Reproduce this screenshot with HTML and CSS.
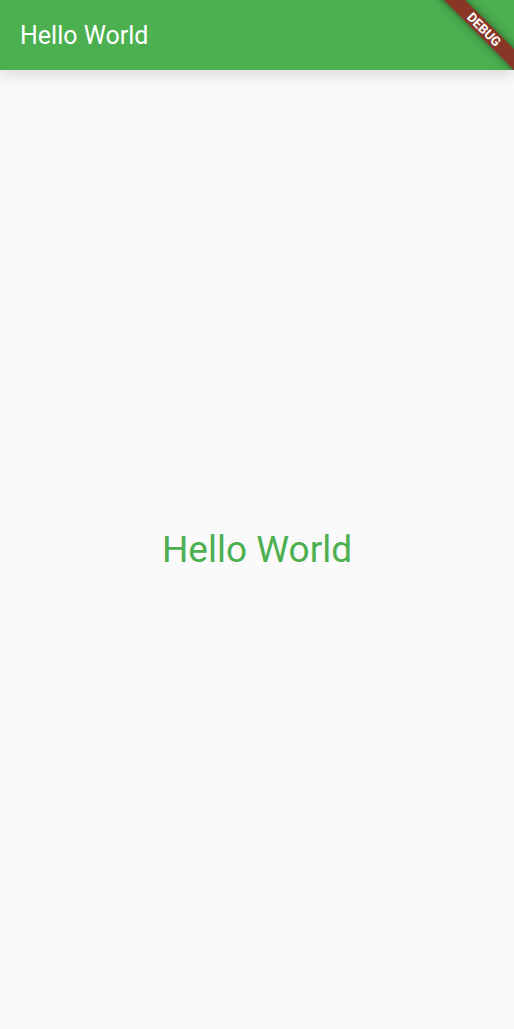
FILE: index.html
```html
<!DOCTYPE html>
<html lang="en">
<head>
<meta charset="utf-8">
<meta name="viewport" content="width=device-width, initial-scale=1">
<title>Hello World</title>
<link rel="stylesheet" href="styles.css">
</head>
<body>
<header class="app-bar"><h1 class="app-title">Hello World</h1></header>
<main class="content"><p class="greeting">Hello World</p></main>
<div class="banner"><span class="banner-label">DEBUG</span></div>
</body>
</html>
```
FILE: styles.css
```css
* {
  box-sizing: border-box;
}

body {
  margin: 0;
  min-height: 100vh;
  display: flex;
  flex-direction: column;
  background: #fafafa;
  font-family: Roboto, sans-serif;
}

.app-bar {
  display: flex;
  align-items: center;
  min-height: 70px;
  padding: 2px 20px 0;
  background: #4caf50;
  color: #fff;
  box-shadow: 0 4px 16px rgba(0, 0, 0, 0.15);
}

.app-title {
  margin: 0;
  font-size: 25px;
  line-height: 30px;
  font-weight: 400;
}

.content {
  flex: 1;
  display: flex;
  align-items: center;
  justify-content: center;
}

.greeting {
  margin: 0;
  color: #4caf50;
  font-size: 37px;
  line-height: 44px;
}

.banner {
  position: absolute;
  top: 0;
  right: 0;
  width: 80px;
  height: 70px;
  overflow: hidden;
}

.banner-label {
  position: absolute;
  top: 22px;
  right: -40px;
  width: 140px;
  transform: rotate(45deg);
  background: #883626;
  color: #fff;
  box-shadow: 0 0 8px rgba(0, 0, 0, 0.5);
  font-size: 13px;
  line-height: 15px;
  font-weight: 700;
  text-align: center;
}
```
